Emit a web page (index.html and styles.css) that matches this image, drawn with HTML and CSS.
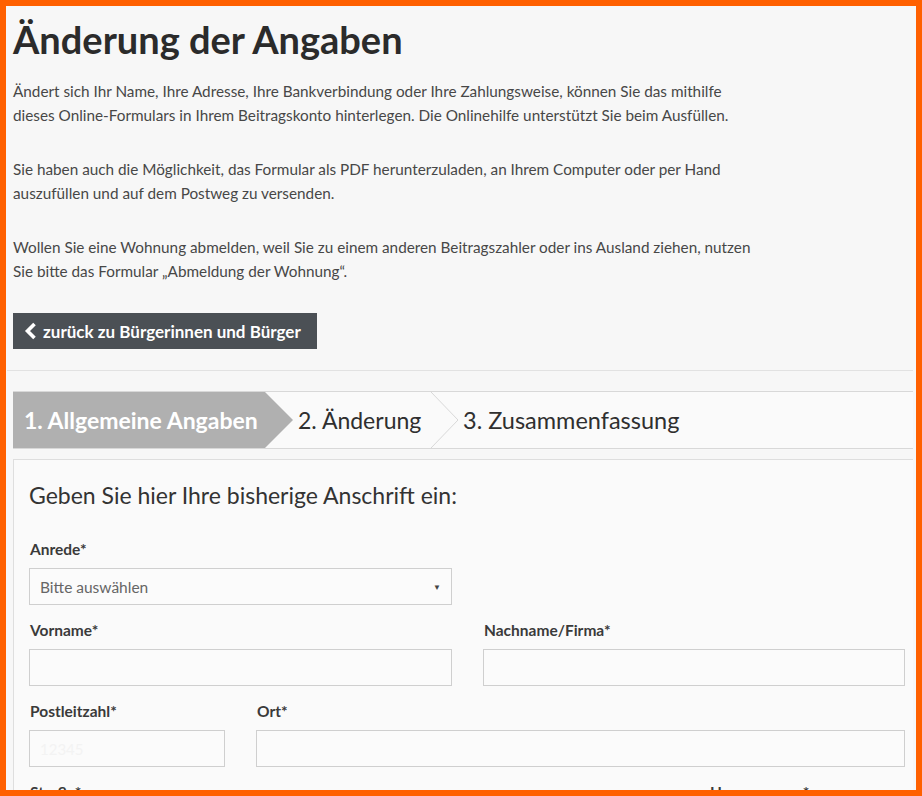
FILE: index.html
```html
<!DOCTYPE html>
<html lang="de">
<head>
<meta charset="utf-8">
<title>Änderung der Angaben</title>
<link rel="stylesheet" href="styles.css">
</head>
<body>
<div class="frame">
  <main class="page">
    <h1 class="title">Änderung der Angaben</h1>
    <p class="intro"><span class="line">Ändert sich Ihr Name, Ihre Adresse, Ihre Bankverbindung oder Ihre Zahlungsweise, können Sie das mithilfe</span><span class="line">dieses Online-Formulars in Ihrem Beitragskonto hinterlegen. Die Onlinehilfe unterstützt Sie beim Ausfüllen.</span></p>
    <p class="intro"><span class="line">Sie haben auch die Möglichkeit, das Formular als PDF herunterzuladen, an Ihrem Computer oder per Hand</span><span class="line">auszufüllen und auf dem Postweg zu versenden.</span></p>
    <p class="intro"><span class="line">Wollen Sie eine Wohnung abmelden, weil Sie zu einem anderen Beitragszahler oder ins Ausland ziehen, nutzen</span><span class="line">Sie bitte das Formular „Abmeldung der Wohnung“.</span></p>
    <a class="back-btn" href="#"><svg class="chev" viewBox="0 0 13 18" width="13" height="18"><path d="M10.5 2 L3.5 9 L10.5 16" fill="none" stroke="#fff" stroke-width="3.6" stroke-linejoin="miter"/></svg><span>zurück zu Bürgerinnen und Bürger</span></a>
    <div class="divider"></div>
    <nav class="steps">
      <div class="step step-active">1. Allgemeine Angaben</div>
      <div class="step step-two">2. Änderung</div>
      <svg class="step-sep" viewBox="0 0 30 56" width="30" height="56"><path d="M1 0 L28 28 L1 56" fill="none" stroke="#d8d8d8" stroke-width="1"/></svg>
      <div class="step step-three">3. Zusammenfassung</div>
    </nav>
    <section class="form-box">
      <h2 class="form-title">Geben Sie hier Ihre bisherige Anschrift ein:</h2>
      <div class="row row-half">
        <div class="field">
          <label class="label">Anrede*</label>
          <div class="select"><span class="select-text">Bitte auswählen</span><span class="select-arrow">▼</span></div>
        </div>
      </div>
      <div class="row row-half">
        <div class="field">
          <label class="label">Vorname*</label>
          <div class="input"></div>
        </div>
        <div class="field">
          <label class="label">Nachname/Firma*</label>
          <div class="input"></div>
        </div>
      </div>
      <div class="row row-plz">
        <div class="field">
          <label class="label">Postleitzahl*</label>
          <div class="input"><span class="placeholder">12345</span></div>
        </div>
        <div class="field">
          <label class="label">Ort*</label>
          <div class="input"></div>
        </div>
      </div>
      <div class="row row-street">
        <div class="field">
          <label class="label">Straße*</label>
          <div class="input"></div>
        </div>
        <div class="field">
          <label class="label">Hausnummer*</label>
          <div class="input"></div>
        </div>
      </div>
    </section>
  </main>
</div>
</body>
</html>
```
FILE: styles.css
```css
* { box-sizing: border-box; }
html, body { margin: 0; padding: 0; }
body {
  font-family: Lato, "Open Sans", sans-serif;
  color: #3d3d3d;
  background: #f7f7f7;
}
.frame {
  width: 922px;
  height: 796px;
  border: 6px solid #ff6000;
  overflow: hidden;
  background: #f7f7f7;
}
.page {
  padding: 0 3px 0 0;
}
.title {
  margin: 0;
  padding: 10px 0 0 7px;
  font-size: 38px;
  line-height: 46px;
  font-weight: 700;
  color: #2b2b2b;
}
.intro {
  margin: 0;
  padding-left: 7px;
  font-size: 15.3px;
  line-height: 24px;
  color: #474747;
}
.intro:first-of-type { margin-top: 17px; }
.intro + .intro { margin-top: 30px; }
.line { display: block; white-space: nowrap; }
.back-btn {
  display: inline-flex;
  align-items: center;
  gap: 6px;
  margin: 30px 0 0 7px;
  height: 36px;
  width: 304px;
  padding-left: 11px;
  background: #4b5055;
  color: #fff;
  font-weight: 700;
  font-size: 17px;
  text-decoration: none;
}
.chev { flex: none; display: block; }
.divider {
  margin-top: 21px;
  margin-left: 1px;
  height: 1px;
  background: #e2e2e2;
}
.steps {
  display: flex;
  align-items: center;
  margin: 20px 0 0 7px;
  height: 58px;
  border-top: 1px solid #d8d8d8;
  border-bottom: 1px solid #d8d8d8;
  background: #fafafa;
}
.step {
  height: 56px;
  display: flex;
  align-items: center;
  font-size: 23px;
  color: #2f2f2f;
  white-space: nowrap;
}
.step-active {
  width: 280px;
  padding-left: 11px;
  background: #b0b0b0;
  color: #fff;
  font-weight: 700;
  clip-path: polygon(0 0, 252px 0, 280px 50%, 252px 100%, 0 100%);
}
.step-two {
  width: 137px;
  padding-left: 5px;
}
.step-sep { flex: none; display: block; }
.step-three { padding-left: 3px; font-size: 23.5px; }
.form-box {
  margin: 10px 0 0 7px;
  border: 1px solid #dedede;
  border-right: 0;
  background: #fafafa;
  padding: 20px 8px 40px 15px;
}
.form-title {
  margin: 0 0 29px 0;
  font-size: 23px;
  line-height: 30px;
  font-weight: 400;
  color: #333;
}
.row {
  display: grid;
  column-gap: 31px;
  margin-bottom: 15px;
}
.row-half { grid-template-columns: 423px 422px; }
.row-plz { grid-template-columns: 196px 649px; }
.row-street { grid-template-columns: 649px 196px; }
.field { display: flex; flex-direction: column; }
.label {
  display: block;
  font-size: 15.5px;
  line-height: 20px;
  font-weight: 700;
  color: #3a3a3a;
  margin: 0 0 9px 1px;
}
.select, .input {
  height: 37px;
  border: 1px solid #cfcfcf;
  background: #fbfbfb;
  display: flex;
  align-items: center;
  padding: 0 10px;
}
.select { justify-content: space-between; }
.select-text { font-size: 15.5px; color: #666; }
.select-arrow { font-size: 8px; color: #444; }
.placeholder { font-size: 15px; color: #f3f3f3; }
```
